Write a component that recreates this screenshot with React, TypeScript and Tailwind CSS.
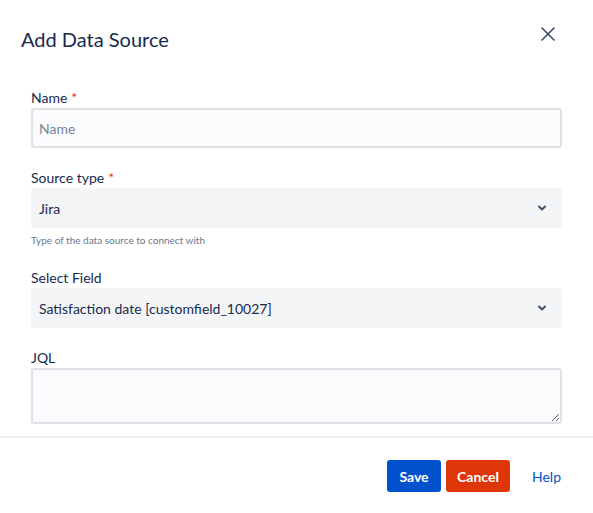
import { X } from 'lucide-react'

// 폼 필드 공통 라벨
function Label({ text, required }: { text: string; required?: boolean }) {
  return (
    <label className="block h-5 text-[14px] leading-5 text-[#172b4d]">
      {text}
      {required && <span className="ml-1 text-[#de350b]">*</span>}
    </label>
  )
}

function Chevron() {
  return (
    <svg width="10" height="10" viewBox="0 0 10 10" className="text-[#42526e]">
      <path d="M2 3.5 L5 6.5 L8 3.5" fill="none" stroke="currentColor" strokeWidth="2" strokeLinecap="round" strokeLinejoin="round" />
    </svg>
  )
}

function Select({ value }: { value: string }) {
  return (
    <div className="flex h-10 w-full items-center justify-between rounded-[3px] bg-[#f4f5f7] pl-2 pr-[15px] text-[14px] text-[#172b4d]">
      <span>{value}</span>
      <Chevron />
    </div>
  )
}

export default function App() {
  return (
    <div
      className="min-h-screen w-[593px] bg-white"
      style={{ fontFamily: 'Lato, "Noto Sans", sans-serif' }}
    >
      <div className="flex items-start justify-between pl-[21px] pr-[33px] pt-[25px]">
        <h1 className="text-[20px] leading-7 font-normal text-[#172b4d]">Add Data Source</h1>
        <button className="mt-[-3px] text-[#42526e]">
          <X size={24} strokeWidth={1.75} />
        </button>
      </div>

      <form className="mt-[35px] px-[31px]">
        <Label text="Name" required />
        <input
          placeholder="Name"
          className="h-10 w-full rounded-[3px] border-2 border-[#dfe1e6] bg-[#fafbfc] px-[6px] text-[14px] text-[#172b4d] placeholder:text-[#7a869a] focus:outline-none"
        />

        <div className="mt-5">
          <Label text="Source type" required />
          <Select value="Jira" />
          <p className="mt-1 text-[10px] leading-4 text-[#6b778c]">Type of the data source to connect with</p>
        </div>

        <div className="mt-5">
          <Label text="Select Field" />
          <Select value="Satisfaction date [customfield_10027]" />
        </div>

        <div className="mt-5">
          <Label text="JQL" />
          <textarea className="block h-14 w-full rounded-[3px] border-2 border-[#dfe1e6] bg-[#fafbfc] px-[6px] text-[14px] focus:outline-none" />
        </div>
      </form>

      <div className="mt-3 h-[2px] w-full bg-[#ebecf0]" />

      <div className="mt-[22px] flex items-center justify-end gap-[5px] pr-8">
        <button className="h-8 w-[54px] rounded-[3px] bg-[#0052cc] text-[14px] font-bold text-white">Save</button>
        <button className="h-8 w-[64px] rounded-[3px] bg-[#de350b] text-[14px] font-bold text-white">Cancel</button>
        <button className="ml-[17px] h-8 text-[14px] text-[#0052cc]">Help</button>
      </div>
    </div>
  )
}
